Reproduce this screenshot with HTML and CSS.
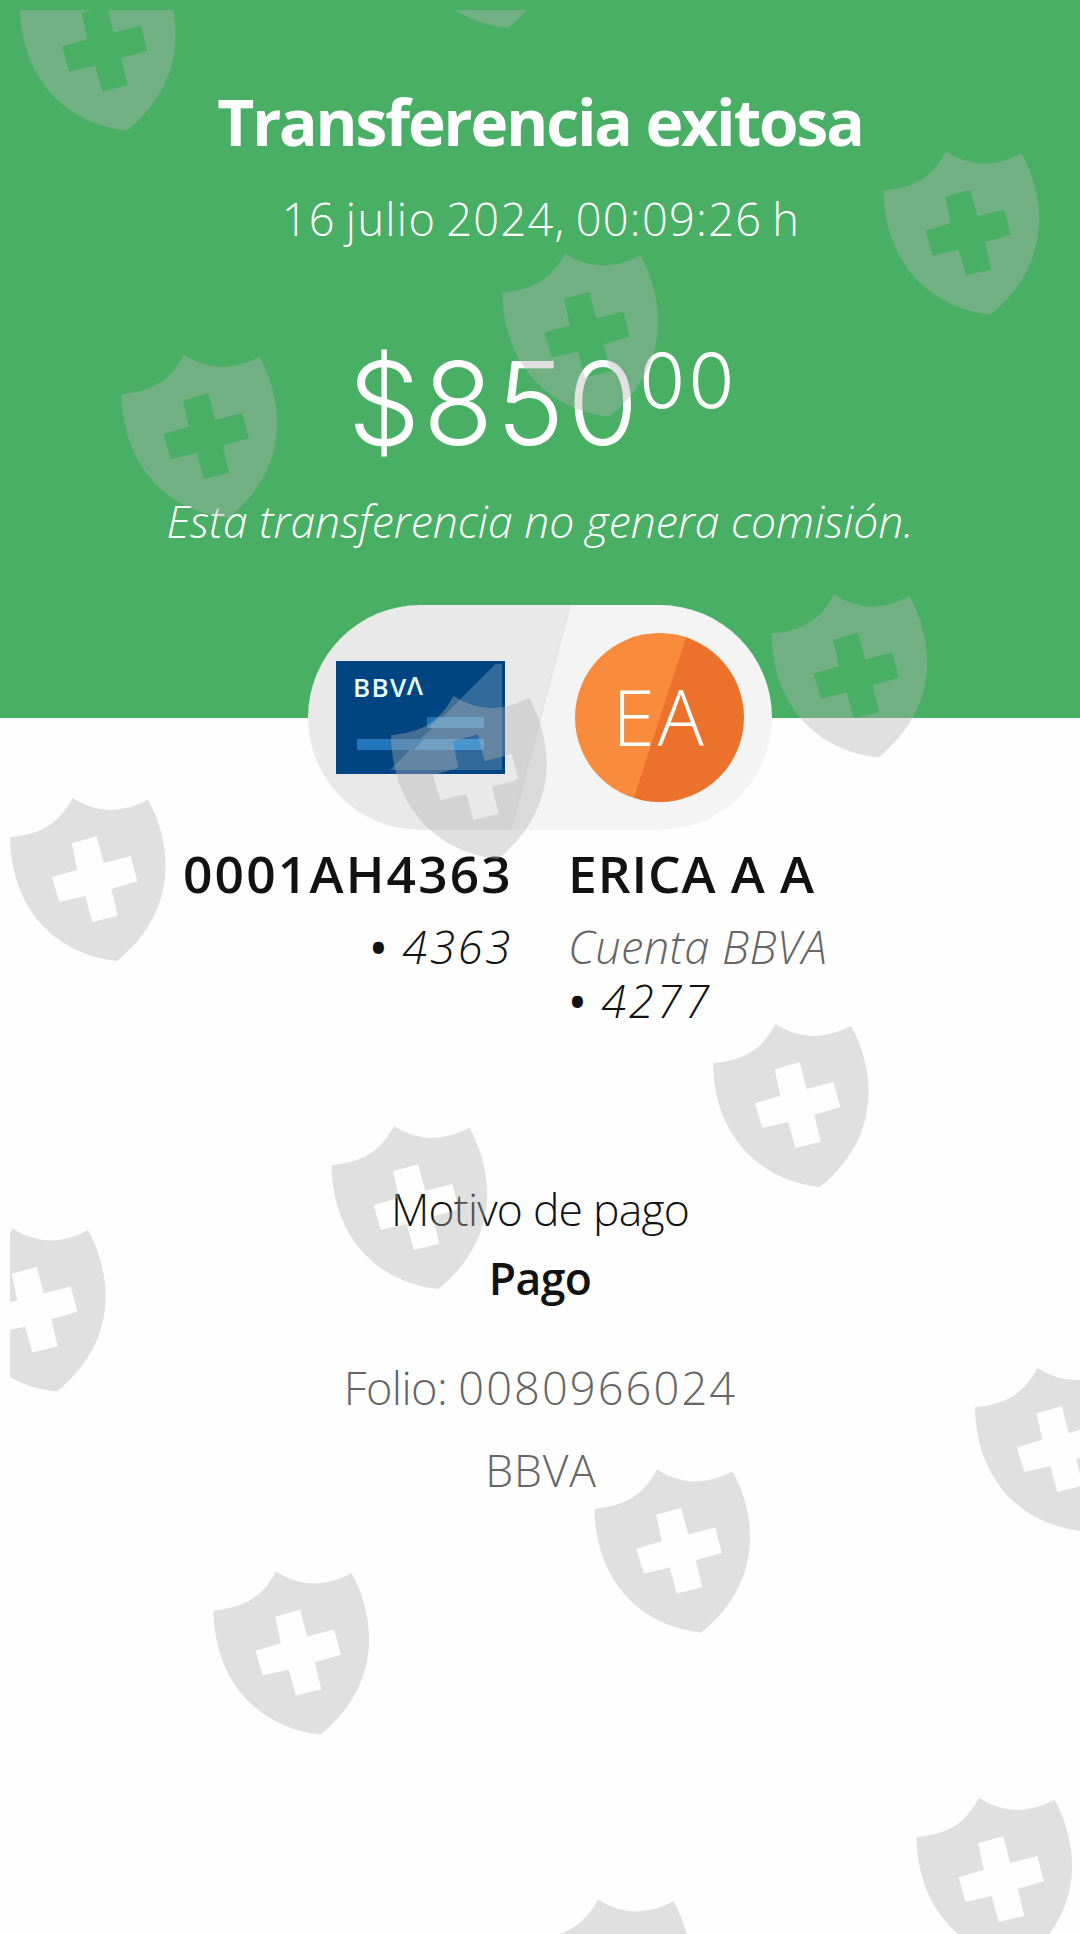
FILE: index.html
```html
<!DOCTYPE html>
<html lang="es">
  <head>
    <meta charset="UTF-8" />
    <meta name="viewport" content="width=device-width, initial-scale=1.0" />
    <title>Transferencia exitosa</title>
    <link rel="stylesheet" href="styles.css">
  </head>
  <body>
    <div class="receipt">
      <header class="header">
        <h1 class="title">Transferencia exitosa</h1>
        <p class="date">16 julio 2024, 00:09:26 h</p>
        <p class="amount">$850<sup class="cents">00</sup></p>
        <p class="note">Esta transferencia no genera comisión.</p>
      </header>

      <div class="pill">
        <div class="card">
          <span class="card-logo" aria-label="BBVA">BBV<span class="card-logo-a">Λ</span></span>
          <span class="card-line short"></span>
          <span class="card-line long"></span>
        </div>
        <div class="avatar">EA</div>
      </div>

      <div class="accounts">
        <div class="account from">
          <h2 class="name">0001AH4363</h2>
          <p class="number"><span class="dot">•</span> 4363</p>
        </div>
        <div class="account">
          <h2 class="name to-name">ERICA A A</h2>
          <p class="bank">Cuenta BBVA</p>
          <p class="number"><span class="dot">•</span> 4277</p>
        </div>
      </div>

      <div class="details">
        <p class="label">Motivo de pago</p>
        <p class="reason">Pago</p>
        <p class="folio">Folio: <span class="folio-number">0080966024</span></p>
        <p class="brand">BBVA</p>
      </div>

      <svg class="watermark" viewBox="10 10 1070 1924">
        <defs>
          <path id="shield" fill-rule="evenodd" d="M0 39.3C30 36 48 27 62.5 0Q98 23 138 1.7C161 43 171 111 107 163C48 157 1 113 0 39.3ZM61.7 45.3L86.7 38.3L93.7 65L120.7 58L127.3 83.3L101.3 90.7L107.7 117.7L82.3 124L75.3 98L49.3 104L42 79.3L67.3 71.7Z" />
        </defs>
        <use href="#shield" x="20" y="-32.5" />
        <use href="#shield" x="401" y="-135" />
        <use href="#shield" x="883.5" y="151.5" />
        <use href="#shield" x="502.5" y="253.5" />
        <use href="#shield" x="121.5" y="355" />
        <use href="#shield" x="771.5" y="594.5" />
        <use href="#shield" x="391" y="696" />
        <use href="#shield" x="10" y="798" />
        <use href="#shield" x="713" y="1024" />
        <use href="#shield" x="331.5" y="1126" />
        <use href="#shield" x="-50" y="1228.5" />
        <use href="#shield" x="975" y="1368" />
        <use href="#shield" x="594.5" y="1469.5" />
        <use href="#shield" x="213.5" y="1571.5" />
        <use href="#shield" x="916.5" y="1798" />
        <use href="#shield" x="535.5" y="1899.5" />
      </svg>
    </div>
  </body>
</html>
```
FILE: styles.css
```css
* {
  margin: 0;
  padding: 0;
  box-sizing: border-box;
}
body {
  background: #fefefe;
  font-family: 'Open Sans', sans-serif;
  font-weight: 300;
  color: #121212;
}
.receipt {
  position: relative;
  width: 1080px;
  height: 1934px;
  overflow: hidden;
}
.header {
  height: 718px;
  padding-top: 82px;
  background: #49af65;
  color: #fff;
  text-align: center;
}
.title {
  font-size: 64px;
  line-height: 80px;
  font-weight: 700;
  letter-spacing: -2.12px;
}
.date {
  margin-top: 27px;
  padding-left: 2px;
  font-size: 45.2px;
  line-height: 60px;
  letter-spacing: 1.3px;
  word-spacing: -3px;
}
.amount {
  margin-top: 85px;
  padding-left: 5px;
  font-family: Inter, sans-serif;
  font-weight: 300;
  font-size: 115px;
  line-height: 140px;
  letter-spacing: 2.8px;
}
.cents {
  margin-left: -2px;
  font-size: 75px;
  line-height: 0;
  vertical-align: 37px;
}
.note {
  margin-top: 17px;
  font-size: 44.5px;
  line-height: 60px;
  font-style: italic;
}

.pill {
  display: flex;
  align-items: center;
  justify-content: space-between;
  width: 464px;
  height: 225px;
  margin: -113px auto 0;
  padding: 0 28px;
  border-radius: 113px;
  background: linear-gradient(104.7deg, #e9e9e9 0 50%, #dedede 50%, #f4f4f4 50.4%);
  position: relative;
}
.card {
  position: relative;
  width: 169px;
  height: 113px;
  padding: 9px 0 0 17px;
  background: #004481;
}
.card::before {
  content: '';
  position: absolute;
  inset: 3px 3px 4px 54px;
  background: #336a9c;
  clip-path: polygon(94% 0, 100% 0, 100% 100%, 0 100%);
}
.card-logo {
  display: block;
  font-size: 26px;
  line-height: 34px;
  font-weight: 600;
  color: #e8fbff;
  letter-spacing: 1.4px;
  white-space: nowrap;
  position: relative;
}
.card-logo-a {
  position: relative;
  top: -2px;
  left: -1px;
}
.card-line {
  position: absolute;
  height: 11px;
}
.card-line.short {
  left: 91px;
  top: 56px;
  width: 57px;
  background: linear-gradient(135deg, #1f74b8 0 18%, #4996cf 18%);
}
.card-line.long {
  left: 21px;
  top: 78px;
  width: 127px;
  background: linear-gradient(135deg, #2177ba 0 49%, #4996cf 49%);
}
.avatar {
  width: 169px;
  height: 169px;
  border-radius: 50%;
  background: linear-gradient(108deg, #f88b3c 50%, #ec712b 50.4%);
  color: #fff;
  font-size: 76.5px;
  line-height: 167px;
  letter-spacing: 3px;
  text-align: center;
}

.accounts {
  display: grid;
  grid-template-columns: 513px 1fr;
  gap: 55px;
  height: 184px;
  margin-top: 13px;
}
.from {
  text-align: right;
}
.name {
  font-size: 51.5px;
  line-height: 60px;
  font-weight: 600;
  letter-spacing: 2.17px;
  margin-bottom: 17px;
}
.to-name {
  letter-spacing: 0.9px;
}
.number,
.bank {
  font-size: 45.2px;
  line-height: 54px;
  font-style: italic;
}
.number {
  letter-spacing: 2.8px;
  word-spacing: -1px;
}
.dot {
  font-weight: 600;
}
.bank {
  color: #666;
  letter-spacing: 0.4px;
}

.details {
  margin-top: 152px;
  font-size: 44.5px;
  line-height: 60px;
  text-align: center;
}
.label {
  letter-spacing: -0.8px;
}
.reason {
  margin-top: 9px;
  font-weight: 600;
  letter-spacing: -0.6px;
}
.folio {
  margin-top: 50px;
  padding-left: 1px;
  font-size: 45.2px;
  letter-spacing: -0.6px;
  color: #666;
}
.folio-number {
  letter-spacing: 2.1px;
}
.brand {
  margin-top: 22px;
  padding-left: 2px;
  letter-spacing: 0.84px;
  color: #666;
}

/* shields laid over the whole receipt */
.watermark {
  position: absolute;
  left: 10px;
  top: 10px;
  width: 1070px;
  height: 1924px;
  overflow: hidden;
  fill: rgba(177, 177, 177, 0.39);
  pointer-events: none;
}
```
